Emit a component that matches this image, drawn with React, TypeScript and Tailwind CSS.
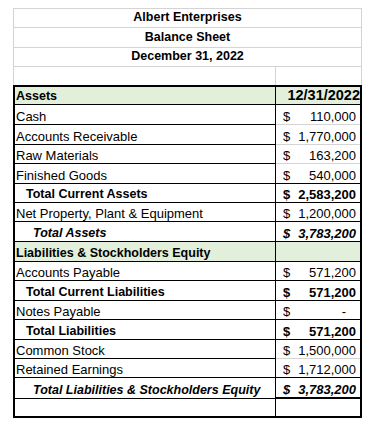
import React from 'react';

type Kind = 'header' | 'normal' | 'total' | 'grand' | 'blank';

interface Line {
    label: string;
    amount?: string;
    kind: Kind;
    h: string;
    labelLine: string;
    valueLine: string;
}

const GRAY = 'border-b border-[#d4d4d4]';
const BLACK = 'border-b border-black';

const lines: Line[] = [
    { label: 'Assets', amount: '12/31/2022', kind: 'header', h: 'h-[18px]', labelLine: GRAY, valueLine: BLACK },
    { label: 'Cash', amount: '110,000', kind: 'normal', h: 'h-[20px]', labelLine: GRAY, valueLine: GRAY },
    { label: 'Accounts Receivable', amount: '1,770,000', kind: 'normal', h: 'h-[20px]', labelLine: GRAY, valueLine: GRAY },
    { label: 'Raw Materials', amount: '163,200', kind: 'normal', h: 'h-[19px]', labelLine: GRAY, valueLine: GRAY },
    { label: 'Finished Goods', amount: '540,000', kind: 'normal', h: 'h-[20px]', labelLine: GRAY, valueLine: BLACK },
    { label: 'Total Current Assets', amount: '2,583,200', kind: 'total', h: 'h-[19px]', labelLine: GRAY, valueLine: BLACK },
    { label: 'Net Property, Plant & Equipment', amount: '1,200,000', kind: 'normal', h: 'h-[19px]', labelLine: GRAY, valueLine: BLACK },
    { label: 'Total Assets', amount: '3,783,200', kind: 'grand', h: 'h-[20px]', labelLine: BLACK, valueLine: BLACK },
    { label: 'Liabilities & Stockholders Equity', kind: 'header', h: 'h-[20px]', labelLine: GRAY, valueLine: BLACK },
    { label: 'Accounts Payable', amount: '571,200', kind: 'normal', h: 'h-[19px]', labelLine: GRAY, valueLine: BLACK },
    { label: 'Total Current Liabilities', amount: '571,200', kind: 'total', h: 'h-[20px]', labelLine: GRAY, valueLine: BLACK },
    { label: 'Notes Payable', amount: '-', kind: 'normal', h: 'h-[19px]', labelLine: GRAY, valueLine: BLACK },
    { label: 'Total Liabilities', amount: '571,200', kind: 'total', h: 'h-[20px]', labelLine: GRAY, valueLine: BLACK },
    { label: 'Common Stock', amount: '1,500,000', kind: 'normal', h: 'h-[19px]', labelLine: GRAY, valueLine: GRAY },
    { label: 'Retained Earnings', amount: '1,712,000', kind: 'normal', h: 'h-[19px]', labelLine: GRAY, valueLine: BLACK },
    { label: 'Total Liabilities & Stockholders Equity', amount: '3,783,200', kind: 'grand', h: 'h-[21px]', labelLine: GRAY, valueLine: 'border-b-2 border-black' },
    { label: '', kind: 'blank', h: 'h-[17px]', labelLine: '', valueLine: '' },
];

const labelStyle: Record<Kind, string> = {
    header: 'pl-[1px] font-bold text-[12.5px]',
    normal: 'pl-[1px]',
    total: 'pl-[11px] font-bold text-[12.5px]',
    grand: 'pl-[18px] font-bold italic text-[12.5px]',
    blank: '',
};

const SheetRow = ({ line }: { line: Line }) => {
    const green = line.kind === 'header' ? 'bg-[#e2efda]' : '';
    const strong = line.kind === 'total' ? 'font-bold' : line.kind === 'grand' ? 'font-bold italic' : '';

    return (
        <div className={`flex ${line.h}`}>
            <div className={`w-[261px] shrink-0 border-r border-black flex items-end leading-[15px] whitespace-nowrap ${green} ${line.labelLine} ${labelStyle[line.kind]}`}>
                {line.label}
            </div>
            <div className={`flex-1 flex items-end leading-[15px] ${green} ${line.valueLine}`}>
                {line.kind === 'header' ? (
                    line.amount && <span className="ml-auto font-bold text-[14.5px] pb-[1px]">{line.amount}</span>
                ) : line.amount ? (
                    <div className={`flex-1 flex justify-between pl-[7px] ${line.amount === '-' ? 'pr-[14px]' : 'pr-[4px]'} ${strong}`}>
                        <span>$</span>
                        <span>{line.amount}</span>
                    </div>
                ) : null}
            </div>
        </div>
    );
};

const App = () => {
    return (
        <div className="min-h-[427px] bg-white pt-[8px] pl-[13px] text-[13px] text-black font-['Liberation_Sans',Arial,sans-serif]">
            <div className="w-[349px]">
                {/* Title block */}
                <div className="border border-b-0 border-[#d4d4d4] font-bold text-[12.5px]">
                    <div className="h-[19px] border-b border-[#d4d4d4] flex items-end justify-center pb-[2px] leading-[15px]">
                        Albert Enterprises
                    </div>
                    <div className="h-[20px] border-b border-[#d4d4d4] flex items-end justify-center pb-[2px] leading-[15px]">
                        Balance Sheet
                    </div>
                    <div className="h-[19px] border-b border-[#d4d4d4] flex items-end justify-center pb-[2px] leading-[15px]">
                        December 31, 2022
                    </div>
                    <div className="h-[18px] flex">
                        <div className="w-[262px] border-r border-[#d4d4d4]"></div>
                        <div className="flex-1"></div>
                    </div>
                </div>

                {/* Statement */}
                <div className="border-2 border-black">
                    {lines.map((line, i) => (
                        <SheetRow key={i} line={line} />
                    ))}
                </div>
            </div>
        </div>
    );
};

export default App;
